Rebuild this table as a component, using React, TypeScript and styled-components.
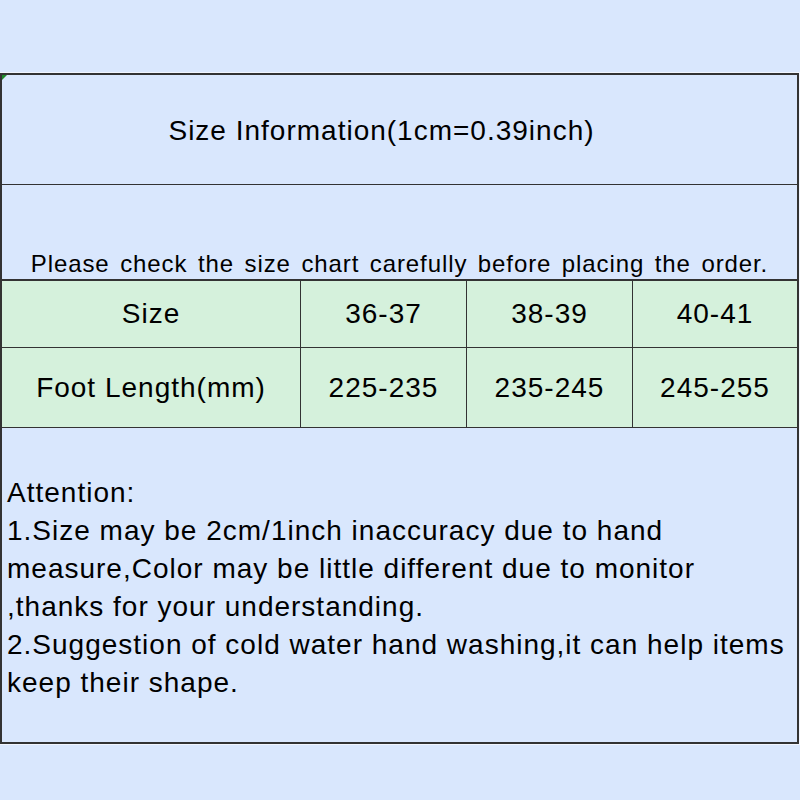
import React from "react";
import styled, { createGlobalStyle } from "styled-components";

const GlobalStyle = createGlobalStyle`
  html, body {
    margin: 0;
    padding: 0;
    background: #d9e7fd;
  }
  body {
    font-family: "Liberation Sans", Arial, sans-serif;
    color: #000;
  }
`;

const Page = styled.div`
  width: 800px;
  height: 800px;
  padding-top: 73px;
  box-sizing: border-box;
  background: #d9e7fd;
`;

const Sheet = styled.div`
  position: relative;
  width: 799px;
  height: 671px;
  box-sizing: border-box;
  border: 2px solid #333;
  box-shadow: 0 0 0 1px #f1f5fd;
  display: flex;
  flex-direction: column;
  letter-spacing: 1px;
`;

const CornerMark = styled.div`
  position: absolute;
  top: 0;
  left: 0;
  width: 0;
  height: 0;
  border-top: 5px solid #1e8a2a;
  border-right: 5px solid transparent;
`;

const TitleRow = styled.div`
  height: 110px;
  border-bottom: 1px solid #333;
  display: flex;
  align-items: center;
  justify-content: center;
  font-size: 28px;
  padding: 2px 36px 0 0;
  box-sizing: border-box;
`;

const NoticeRow = styled.div`
  height: 92px;
  border-bottom: 2px solid #333;
  display: flex;
  align-items: flex-end;
  justify-content: center;
  font-size: 24px;
  letter-spacing: 0.9px;
  word-spacing: 3px;
  padding-bottom: 2px;
  box-sizing: content-box;
  line-height: 27px;
`;

const TableRow = styled.div<{ $h: number }>`
  height: ${(p) => p.$h}px;
  display: grid;
  grid-template-columns: 298px 166px 166px 1fr;
  background: #d5f1dc;
  border-bottom: 1px solid #333;
  box-sizing: content-box;
`;

const Cell = styled.div<{ $first?: boolean }>`
  display: flex;
  align-items: center;
  justify-content: center;
  font-size: 28px;
  border-left: ${(p) => (p.$first ? "none" : "1px solid #333")};
`;

const Attention = styled.div`
  flex: 1;
  padding: 46px 0 0 5px;
  font-size: 28px;
  line-height: 38px;
`;

const Line = styled.div`
  white-space: nowrap;
`;

const sizes = ["36-37", "38-39", "40-41"];
const lengths = ["225-235", "235-245", "245-255"];

export default function App() {
  return (
    <>
      <GlobalStyle />
      <Page>
        <Sheet>
          <CornerMark />
          <TitleRow>Size Information(1cm=0.39inch)</TitleRow>
          <NoticeRow>Please check the size chart carefully before placing the order.</NoticeRow>
          <TableRow $h={66}>
            <Cell $first>Size</Cell>
            {sizes.map((s) => (
              <Cell key={s}>{s}</Cell>
            ))}
          </TableRow>
          <TableRow $h={79}>
            <Cell $first>Foot Length(mm)</Cell>
            {lengths.map((s) => (
              <Cell key={s}>{s}</Cell>
            ))}
          </TableRow>
          <Attention>
            <Line>Attention:</Line>
            <Line>1.Size may be 2cm/1inch inaccuracy due to hand</Line>
            <Line>measure,Color may be little different due to monitor</Line>
            <Line>,thanks for your understanding.</Line>
            <Line>2.Suggestion of cold water hand washing,it can help items</Line>
            <Line>keep their shape.</Line>
          </Attention>
        </Sheet>
      </Page>
    </>
  );
}
